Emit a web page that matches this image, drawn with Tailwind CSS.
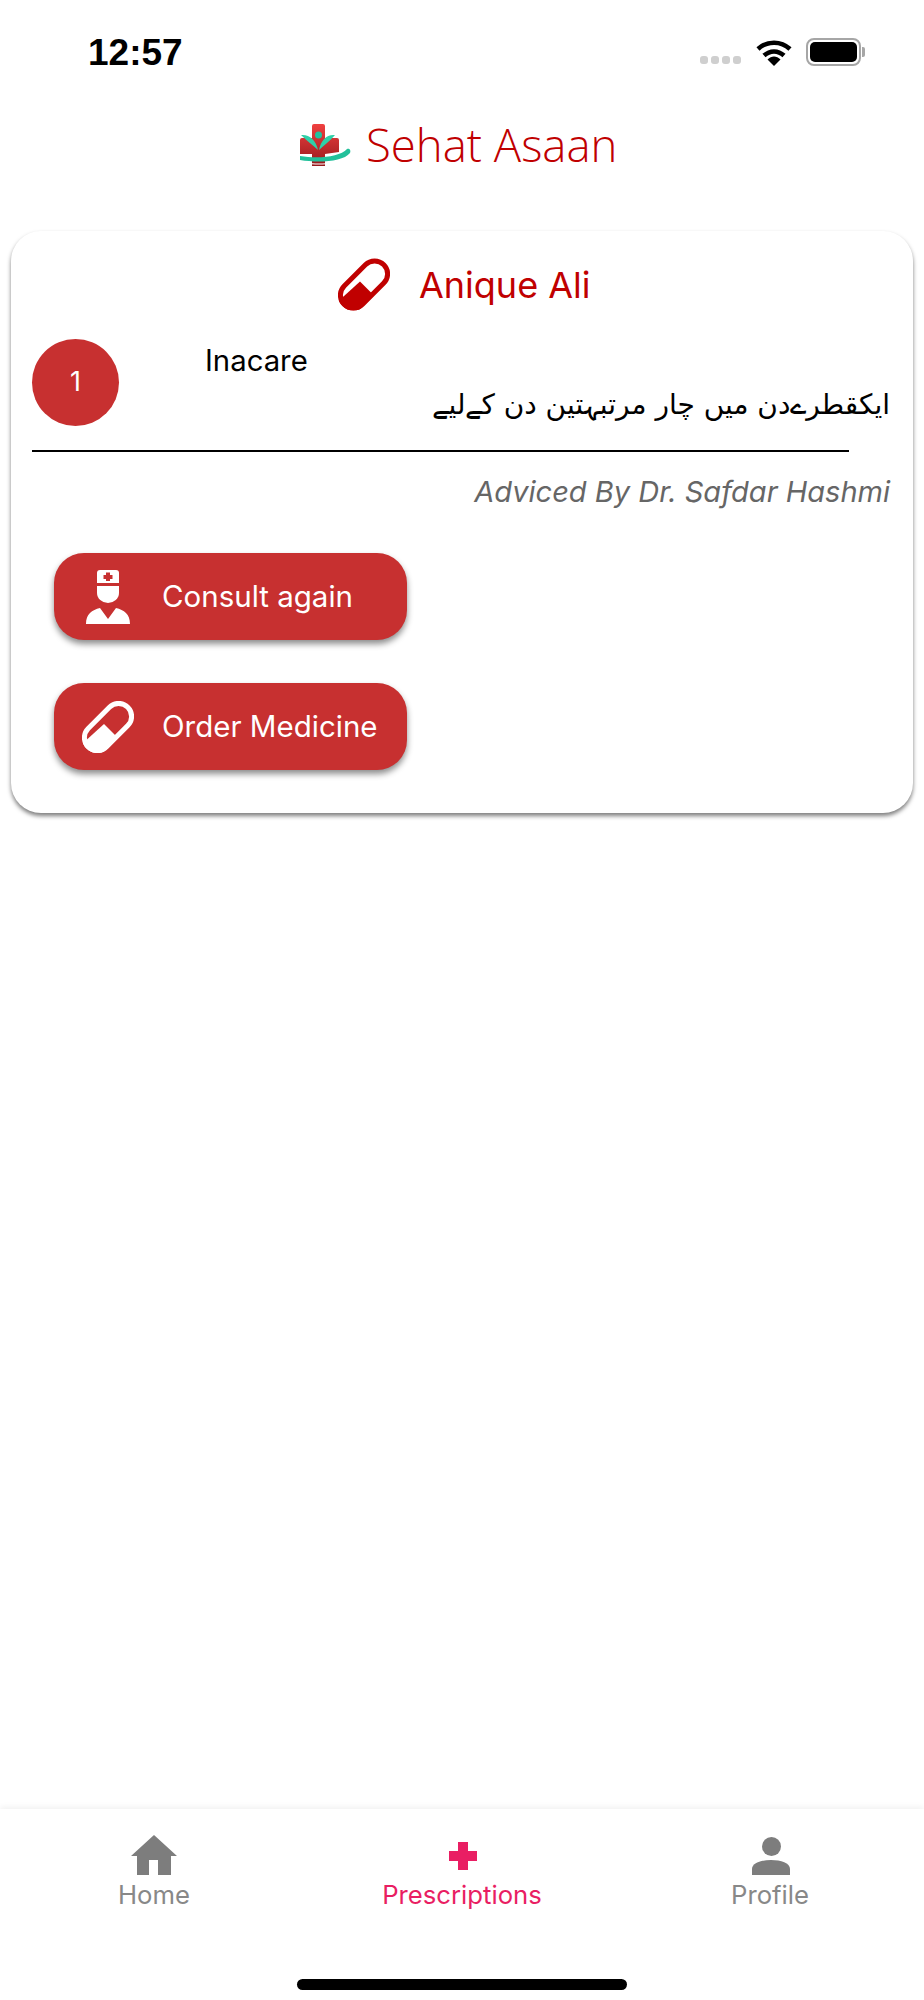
<!DOCTYPE html>
<html lang="en">
<head>
    <meta charset="UTF-8">
    <meta name="viewport" content="width=device-width, initial-scale=1.0">
    <title>Sehat Asaan</title>
    <script src="https://cdn.jsdelivr.net/npm/@tailwindcss/browser@4"></script>
</head>
<body class="bg-white">
<div class="w-[924px] h-[2000px] flex flex-col bg-white font-['Inter',sans-serif]">
    <!-- Status bar -->
    <div class="h-[28px] mt-[38px] pl-[88px] pr-[59px] flex items-center justify-between shrink-0">
        <span class="font-['Liberation_Sans',sans-serif] font-bold text-[37px] leading-none text-black">12:57</span>
        <div class="flex items-center">
            <div class="flex gap-[3px] mt-[16px] mr-[15px]">
                <div class="w-[8px] h-[8px] rounded-[3px] bg-[#cfcfcf]"></div>
                <div class="w-[8px] h-[8px] rounded-[3px] bg-[#cfcfcf]"></div>
                <div class="w-[8px] h-[8px] rounded-[3px] bg-[#cfcfcf]"></div>
                <div class="w-[8px] h-[8px] rounded-[3px] bg-[#cfcfcf]"></div>
            </div>
            <svg class="w-[36px] h-[27px] mr-[14px]" viewBox="0 0 36 27">
                <path d="M2 10 C11 1.500 25 1.500 34 10" fill="none" stroke="#000" stroke-width="4.500"/>
                <path d="M8 16.500 C14 11 22 11 28 16.500" fill="none" stroke="#000" stroke-width="4.500"/>
                <path d="M11.500 20.500 C15.500 16.500 20.500 16.500 24.500 20.500 L18 27 Z" fill="#000"/>
            </svg>
            <div class="w-[55px] h-[28px] rounded-[8px] border-[2px] border-[#a6a6a6] p-[2px]">
                <div class="w-full h-full rounded-[5px] bg-black"></div>
            </div>
            <div class="w-[3px] h-[10px] rounded-r-[2px] bg-[#a6a6a6] ml-[1px]"></div>
        </div>
    </div>

    <!-- Logo header -->
    <div class="h-[42px] mt-[58px] ml-[300px] flex items-center shrink-0">
        <svg class="w-[51px] h-[42px]" viewBox="0 0 51 42">
            <defs>
                <linearGradient id="logoRed" x1="0" y1="0" x2="0" y2="1">
                    <stop offset="0" stop-color="#f04040"/>
                    <stop offset="1" stop-color="#96191c"/>
                </linearGradient>
            </defs>
            <path d="M12 2 Q12 0 14 0 L23 0 Q25 0 25 2 L25 14 L37 14 Q39 14 39 16 L39 28 L25 30 L25 42 L12 42 L12 30 L0 30 L0 16 Q0 14 2 14 L12 14 Z" fill="url(#logoRed)"/>
            <circle cx="18.500" cy="11" r="3.500" fill="#20c4a0"/>
            <path d="M1 11 C9 10 16 16 18 26 C13 21 7 17 1 11 Z" fill="#2fd0a8"/>
            <path d="M35 11 C27 10 21 16 19 26 C24 21 30 17 35 11 Z" fill="#2fd0a8"/>
            <path d="M0 32 C18 35 40 33 47 25 C50 24 51 27 50 29 C43 38 18 39 0 36 Z" fill="#22c09a"/>
            <path d="M5 38 C14 40 24 40 33 38 L33 39 C24 41 14 41 5 39 Z" fill="#fff"/>
        </svg>
        <span class="ml-[15px] font-['Open_Sans',sans-serif] font-light text-[45.500px] leading-none text-[#c00000]">Sehat Asaan</span>
    </div>

    <!-- Prescription card -->
    <div class="w-[902px] h-[582px] mt-[65px] ml-[11px] rounded-[30px] bg-white shadow-[0_3px_4px_rgba(0,0,0,0.5)] shrink-0">
        <div class="h-[53px] mt-[27px] ml-[327px] flex items-center">
            <svg class="w-[52px] h-[53px]" viewBox="0 0 52 52">
                <defs>
                    <clipPath id="pillClipRed">
                        <rect x="-4.500" y="10.500" width="61" height="31" rx="15.500" transform="rotate(-45 26 26)"/>
                    </clipPath>
                </defs>
                <rect x="-2" y="13" width="56" height="26" rx="13" transform="rotate(-45 26 26)" fill="none" stroke="#c00000" stroke-width="5"/>
                <polygon points="22,23 36,37 21,52 0,52 0,43" fill="#c00000" clip-path="url(#pillClipRed)"/>
            </svg>
            <span class="ml-[29px] text-[36px] leading-none text-[#c00000]">Anique Ali</span>
        </div>

        <div class="mt-[28px] ml-[21px] mr-[23px] flex">
            <div class="w-[87px] h-[87px] rounded-full bg-[#c73030] flex items-center justify-center text-white text-[27px] shrink-0">1</div>
            <div class="flex-1 min-w-0">
                <div class="ml-[86px] mt-[4px] text-[29.300px] leading-[36px] text-black">Inacare</div>
                <div dir="rtl" class="mt-[6px] font-['DejaVu_Sans',sans-serif] text-[28px] leading-[40px] text-black">ایکقطرےدن میں چار مرتبہتین دن کےلیے</div>
            </div>
        </div>

        <div class="h-[2px] w-[817px] mt-[24px] ml-[21px] bg-black"></div>

        <div class="mt-[22px] mr-[23px] text-right italic text-[29px] leading-[36px] text-[#666666]">Adviced By Dr. Safdar Hashmi</div>

        <div class="mt-[43px] ml-[43px] flex flex-col gap-[43px]">
            <div class="w-[353px] h-[87px] rounded-[30px] bg-[#c73030] shadow-[0_4px_6px_rgba(0,0,0,0.45)] flex items-center pl-[32px]">
                <svg class="w-[44px] h-[54px]" viewBox="0 0 44 54">
                    <path d="M11 3 Q11 0 14 0 L30 0 Q33 0 33 3 L33 13 L11 13 Z" fill="#fff"/>
                    <path d="M20 2.500 H24 V5 H26.500 V9 H24 V11 H20 V9 H17.500 V5 H20 Z" fill="#c73030"/>
                    <path d="M11 16 H33 V23 A11 10 0 0 1 11 23 Z" fill="#fff"/>
                    <path d="M14 38 L22 49 L30 38 C38 40 44 44 44 54 L0 54 C0 44 6 40 14 38 Z" fill="#fff"/>
                </svg>
                <span class="ml-[32px] text-[29.500px] leading-none text-white">Consult again</span>
            </div>
            <div class="w-[353px] h-[87px] rounded-[30px] bg-[#c73030] shadow-[0_4px_6px_rgba(0,0,0,0.45)] flex items-center pl-[28px]">
                <svg class="w-[52px] h-[52px]" viewBox="0 0 52 52">
                    <defs>
                        <clipPath id="pillClipWhite">
                            <rect x="-4.500" y="10.500" width="61" height="31" rx="15.500" transform="rotate(-45 26 26)"/>
                        </clipPath>
                    </defs>
                    <rect x="-2" y="13" width="56" height="26" rx="13" transform="rotate(-45 26 26)" fill="none" stroke="#fff" stroke-width="5"/>
                    <polygon points="22,23 36,37 21,52 0,52 0,43" fill="#fff" clip-path="url(#pillClipWhite)"/>
                </svg>
                <span class="ml-[28px] text-[29.500px] leading-none text-white">Order Medicine</span>
            </div>
        </div>
    </div>

    <div class="flex-1"></div>

    <!-- Bottom tabs -->
    <div class="h-[191px] shrink-0 shadow-[0_-2px_6px_rgba(0,0,0,0.06)] flex flex-col">
        <div class="grid grid-cols-3 mt-[26px]">
            <div class="flex flex-col items-center">
                <svg class="w-[46px] h-[40px]" viewBox="0 0 46 40">
                    <path d="M23 0 L46 21 L40 21 L40 40 L27 40 L27 25 L18 25 L18 40 L6 40 L6 21 L0 21 Z" fill="#7d7d7d"/>
                </svg>
                <span class="mt-[5px] text-[25.700px] leading-[30px] text-[#888888]">Home</span>
            </div>
            <div class="flex flex-col items-center">
                <svg class="w-[46px] h-[40px]" viewBox="0 0 46 40">
                    <path d="M19 7 H29 V16 H38 V26 H29 V35 H19 V26 H10 V16 H19 Z" fill="#e91e63"/>
                </svg>
                <span class="mt-[5px] text-[25.700px] leading-[30px] text-[#e91e63]">Prescriptions</span>
            </div>
            <div class="flex flex-col items-center">
                <svg class="w-[46px] h-[40px]" viewBox="0 0 46 40">
                    <ellipse cx="24.500" cy="11.500" rx="9.500" ry="9.500" fill="#7d7d7d"/>
                    <path d="M5 40 V34 C5 28 14 25 24 25 C34 25 43 28 43 34 V40 Z" fill="#7d7d7d"/>
                </svg>
                <span class="mt-[5px] text-[25.700px] leading-[30px] text-[#888888]">Profile</span>
            </div>
        </div>
        <div class="w-[330px] h-[11px] mt-[69px] mx-auto rounded-full bg-black"></div>
    </div>
</div>
</body>
</html>
